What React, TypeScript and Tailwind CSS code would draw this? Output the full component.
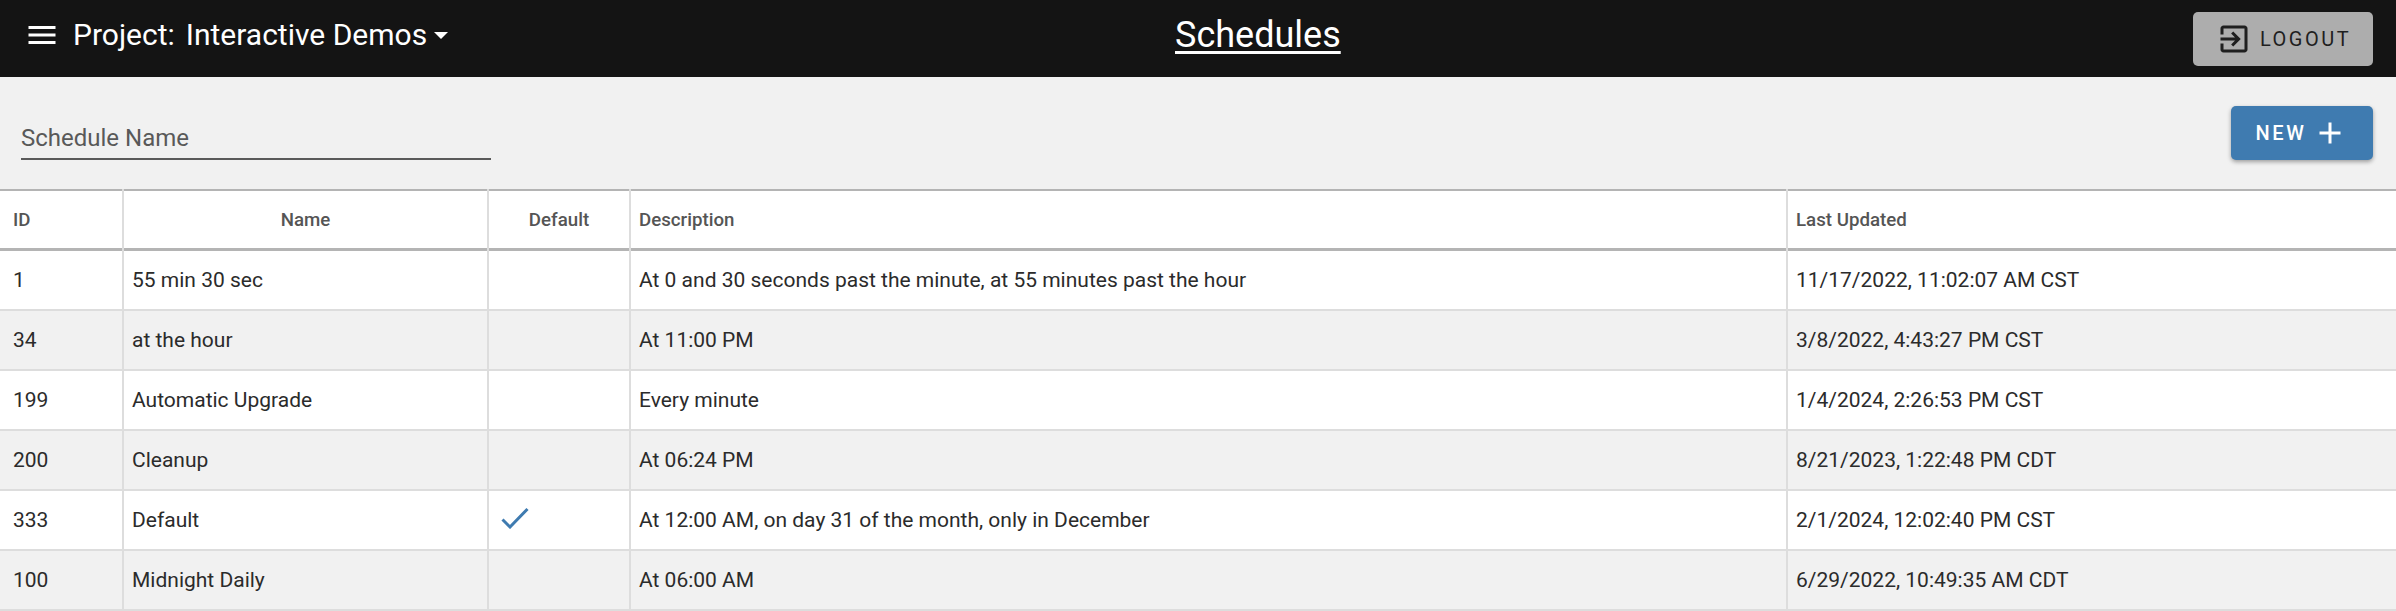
import React from 'react';

const rows = [
  { id: '1', name: '55 min 30 sec', isDefault: false, description: 'At 0 and 30 seconds past the minute, at 55 minutes past the hour', updated: '11/17/2022, 11:02:07 AM CST' },
  { id: '34', name: 'at the hour', isDefault: false, description: 'At 11:00 PM', updated: '3/8/2022, 4:43:27 PM CST' },
  { id: '199', name: 'Automatic Upgrade', isDefault: false, description: 'Every minute', updated: '1/4/2024, 2:26:53 PM CST' },
  { id: '200', name: 'Cleanup', isDefault: false, description: 'At 06:24 PM', updated: '8/21/2023, 1:22:48 PM CDT' },
  { id: '333', name: 'Default', isDefault: true, description: 'At 12:00 AM, on day 31 of the month, only in December', updated: '2/1/2024, 12:02:40 PM CST' },
  { id: '100', name: 'Midnight Daily', isDefault: false, description: 'At 06:00 AM', updated: '6/29/2022, 10:49:35 AM CDT' },
];

function Icon({ d, className }: { d: string; className: string }) {
  return (
    <svg viewBox="0 0 24 24" fill="currentColor" className={className}>
      <path d={d} />
    </svg>
  );
}

function App() {
  return (
    <div className="h-[611px] overflow-hidden bg-[#f1f1f1] font-['Roboto',sans-serif]">
      <header className="flex h-[77px] items-center bg-[#141414] pl-[24px] pr-[23px] text-white">
        <div className="flex w-[1151px] items-center pb-[7px]">
          <Icon d="M3 18h18v-2H3v2zm0-5h18v-2H3v2zm0-7v2h18V6H3z" className="h-[36px] w-[36px]" />
          <span className="ml-[13px] text-[30px] leading-none">Project:</span>
          <span className="ml-[11px] text-[30px] leading-none">Interactive Demos</span>
          <span className="ml-[7px] mt-[1px] h-0 w-0 border-x-[7px] border-t-[7px] border-x-transparent border-t-white" />
        </div>
        <h1 className="pb-[7px] text-[36px] leading-[42px] underline decoration-[3px] underline-offset-[4px]">
          Schedules
        </h1>
        <button className="ml-auto flex h-[54px] w-[180px] items-center justify-center gap-[8px] rounded-[5px] bg-[#adadad] pl-[1px] text-[#1f1f1f]">
          <Icon
            d="M10.09 15.59L11.5 17l5-5-5-5-1.41 1.41L12.67 11H3v2h9.67l-2.58 2.59zM19 3H5c-1.11 0-2 .9-2 2v4h2V5h14v14H5v-4H3v4c0 1.1.89 2 2 2h14c1.1 0 2-.9 2-2V5c0-1.1-.9-2-2-2z"
            className="h-[36px] w-[36px]"
          />
          <span className="text-[20px] tracking-[2.5px]">LOGOUT</span>
        </button>
      </header>

      <div className="flex h-[112px] items-start justify-between pl-[21px] pr-[23px]">
        <div className="mt-[43px] h-[40px] w-[470px] border-b-2 border-[#5a5a5a] text-[24px] leading-[36px] text-[#595959]">
          Schedule Name
        </div>
        <button className="mt-[29px] flex h-[54px] w-[142px] items-center justify-center gap-[6px] rounded-[5px] bg-[#3f7bb0] text-white shadow-[0_2px_4px_rgba(0,0,0,0.35)]">
          <span className="text-[20px] font-medium tracking-[2.6px]">NEW</span>
          <Icon d="M19 13h-6v6h-2v-6H5v-2h6V5h2v6h6v2z" className="h-[36px] w-[36px]" />
        </button>
      </div>

      <table className="w-full table-fixed border-collapse bg-white text-[#2b2b2b]">
        <colgroup>
          <col className="w-[123px]" />
          <col className="w-[365px]" />
          <col className="w-[142px]" />
          <col className="w-[1157px]" />
          <col />
        </colgroup>
        <thead>
          <tr className="h-[62px] text-[18.7px] text-[#555555] shadow-[inset_0_2px_0_#b4b4b4,inset_0_-3px_0_#b4b4b4]">
            <th className="border-r-2 border-[#dddddd] pl-[13px] text-left font-medium">ID</th>
            <th className="border-r-2 border-[#dddddd] text-center font-medium">Name</th>
            <th className="border-r-2 border-[#dddddd] text-center font-medium">Default</th>
            <th className="border-r-2 border-[#dddddd] pl-[8px] text-left font-medium">Description</th>
            <th className="pl-[8px] text-left font-medium">Last Updated</th>
          </tr>
        </thead>
        <tbody className="text-[21px]">
          {rows.map((row, i) => (
            <tr
              key={row.id}
              className={`border-b-2 border-[#dddddd] ${i === 0 ? 'h-[59px]' : 'h-[60px]'} ${i % 2 === 1 ? 'bg-[#f1f1f1]' : 'bg-white'}`}
            >
              <td className="border-r-2 border-[#dddddd] pl-[13px] pt-[2px]">{row.id}</td>
              <td className="border-r-2 border-[#dddddd] pl-[8px] pt-[2px]">{row.name}</td>
              <td className="border-r-2 border-[#dddddd] pl-[12px]">
                {row.isDefault && (
                  <svg viewBox="0 0 28 22" className="-mt-[5px] h-[22px] w-[28px]" fill="none">
                    <path d="M1.5 12.5 L9 20 L26.5 2" stroke="#3f7bb0" strokeWidth="3" />
                  </svg>
                )}
              </td>
              <td className="border-r-2 border-[#dddddd] pl-[8px] pt-[2px]">{row.description}</td>
              <td className="pl-[8px] pt-[2px]">{row.updated}</td>
            </tr>
          ))}
        </tbody>
      </table>
    </div>
  );
}

export default App;
